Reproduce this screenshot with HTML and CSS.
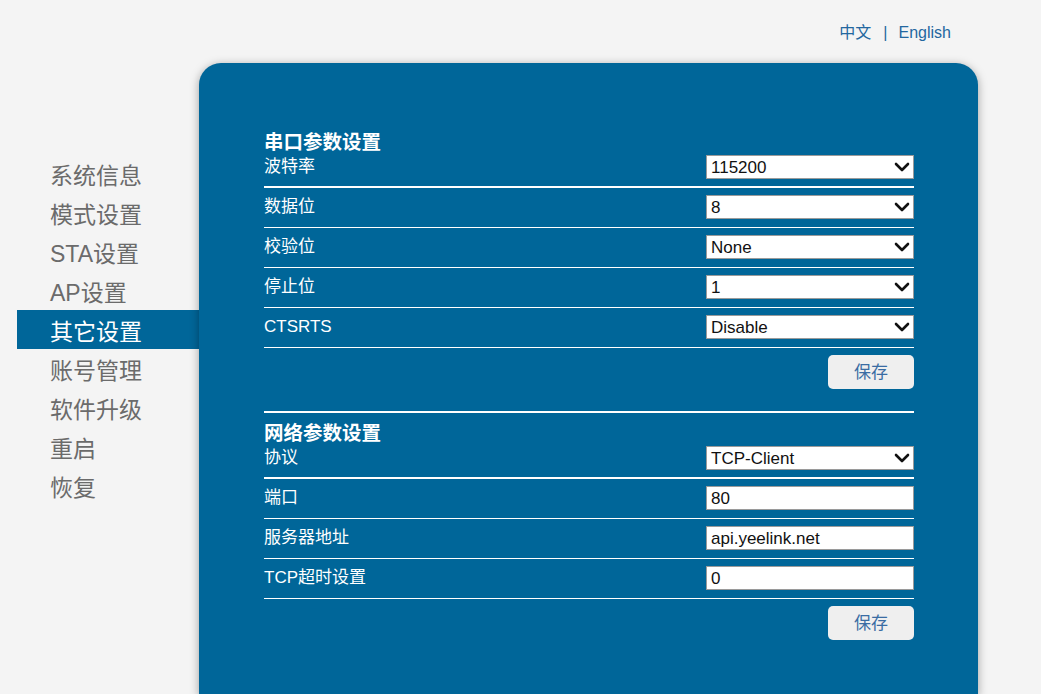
FILE: index.html
```html
<!DOCTYPE html>
<html lang="zh-CN">
<head>
<meta charset="utf-8">
<title>其它设置</title>
<link rel="stylesheet" href="styles.css">
</head>
<body>
<div class="page">
  <header class="top">
    <nav class="lang"><a href="#">中文</a><span class="sep">|</span><a href="#">English</a></nav>
  </header>
  <div class="main">
    <aside class="side">
      <ul class="menu">
        <li>系统信息</li>
        <li>模式设置</li>
        <li>STA设置</li>
        <li>AP设置</li>
        <li class="active">其它设置</li>
        <li>账号管理</li>
        <li>软件升级</li>
        <li>重启</li>
        <li>恢复</li>
      </ul>
    </aside>
    <section class="panel">
      <div class="group">
        <h2 class="title">串口参数设置</h2>
        <div class="row first"><span class="label">波特率</span><div class="field sel"><span>115200</span><svg class="chev" width="16" height="10" viewBox="0 0 16 10"><path d="M2 2 L8 8 L14 2" fill="none" stroke="#111" stroke-width="2.6" stroke-linecap="round" stroke-linejoin="round"/></svg></div></div>
        <div class="row"><span class="label">数据位</span><div class="field sel"><span>8</span><svg class="chev" width="16" height="10" viewBox="0 0 16 10"><path d="M2 2 L8 8 L14 2" fill="none" stroke="#111" stroke-width="2.6" stroke-linecap="round" stroke-linejoin="round"/></svg></div></div>
        <div class="row"><span class="label">校验位</span><div class="field sel"><span>None</span><svg class="chev" width="16" height="10" viewBox="0 0 16 10"><path d="M2 2 L8 8 L14 2" fill="none" stroke="#111" stroke-width="2.6" stroke-linecap="round" stroke-linejoin="round"/></svg></div></div>
        <div class="row"><span class="label">停止位</span><div class="field sel"><span>1</span><svg class="chev" width="16" height="10" viewBox="0 0 16 10"><path d="M2 2 L8 8 L14 2" fill="none" stroke="#111" stroke-width="2.6" stroke-linecap="round" stroke-linejoin="round"/></svg></div></div>
        <div class="row"><span class="label">CTSRTS</span><div class="field sel"><span>Disable</span><svg class="chev" width="16" height="10" viewBox="0 0 16 10"><path d="M2 2 L8 8 L14 2" fill="none" stroke="#111" stroke-width="2.6" stroke-linecap="round" stroke-linejoin="round"/></svg></div></div>
        <div class="actions"><button class="save">保存</button></div>
      </div>
      <div class="group second">
        <h2 class="title">网络参数设置</h2>
        <div class="row first"><span class="label">协议</span><div class="field sel"><span>TCP-Client</span><svg class="chev" width="16" height="10" viewBox="0 0 16 10"><path d="M2 2 L8 8 L14 2" fill="none" stroke="#111" stroke-width="2.6" stroke-linecap="round" stroke-linejoin="round"/></svg></div></div>
        <div class="row"><span class="label">端口</span><div class="field"><span>80</span></div></div>
        <div class="row"><span class="label">服务器地址</span><div class="field"><span>api.yeelink.net</span></div></div>
        <div class="row"><span class="label">TCP超时设置</span><div class="field"><span>0</span></div></div>
        <div class="actions"><button class="save">保存</button></div>
      </div>
    </section>
  </div>
</div>
</body>
</html>
```
FILE: styles.css
```css
html, body {
  margin: 0;
  padding: 0;
  background: #f4f4f4;
  overflow: hidden;
}
body {
  font-family: "Liberation Sans", "Noto Sans CJK SC", sans-serif;
  width: 1041px;
  height: 694px;
}
.top {
  height: 63px;
  box-sizing: border-box;
  padding-top: 23px;
  display: flex;
  justify-content: flex-end;
  padding-right: 90px;
}
.lang {
  display: flex;
  font-size: 16px;
  line-height: 20px;
}
.lang a {
  color: #23679f;
  text-decoration: none;
}
.lang .sep {
  color: #23679f;
  margin: 0 11px 0 12px;
}
.main {
  display: flex;
  align-items: flex-start;
}
.side {
  width: 199px;
  flex: none;
  padding-top: 91px;
}
.menu {
  list-style: none;
  margin: 0 0 0 17px;
  padding: 0;
}
.menu li {
  height: 39px;
  box-sizing: border-box;
  padding: 5px 0 0 33px;
  line-height: 34px;
  font-size: 23px;
  color: #6b6b6b;
}
.menu li.active {
  background: #006699;
  color: #ffffff;
}
.panel {
  width: 779px;
  flex: none;
  box-sizing: border-box;
  background: #006699;
  border-radius: 22px 22px 0 0;
  box-shadow: 0 2px 10px rgba(0, 0, 0, 0.35);
  padding: 68px 64px 55px 65px;
}
.group.second {
  border-top: 2px solid #ffffff;
  margin-top: 22px;
  padding-top: 9px;
}
.title {
  margin: 0;
  font-size: 19.5px;
  line-height: 22px;
  font-weight: bold;
  color: #ffffff;
}
.row {
  display: flex;
  align-items: center;
  justify-content: space-between;
  padding: 7px 0 8px;
  border-bottom: 1px solid #ffffff;
}
.row.first {
  padding: 2px 0 7px;
  border-bottom-width: 2px;
}
.label {
  color: #ffffff;
  font-size: 17px;
  line-height: 22px;
}
.field {
  position: relative;
  width: 208px;
  height: 24px;
  box-sizing: border-box;
  background: #ffffff;
  border: 1px solid #9a9a9a;
  padding: 1px 0 0 4px;
  font-size: 17px;
  line-height: 21px;
  color: #111111;
}
.chev {
  position: absolute;
  right: 3px;
  top: 6px;
}
.actions {
  display: flex;
  justify-content: flex-end;
  margin-top: 7px;
}
.save {
  width: 86px;
  height: 34px;
  border: none;
  border-radius: 5px;
  background: #efefef;
  color: #3a6ca3;
  font-family: "Noto Sans CJK SC", sans-serif;
  font-size: 17px;
  line-height: 32px;
  padding: 0 0 2px;
}
```
